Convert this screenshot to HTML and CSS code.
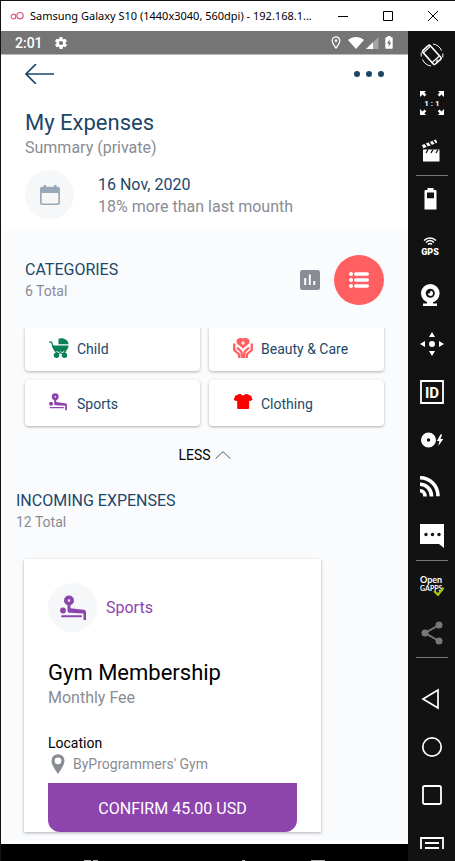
FILE: index.html
```html
<!DOCTYPE html>
<html lang="en">
<head>
<meta charset="utf-8">
<meta name="viewport" content="width=device-width, initial-scale=1">
<title>My Expenses</title>
<link rel="stylesheet" href="styles.css">
</head>
<body>
<div class="window">
  <header class="titlebar">
    <svg class="app-logo" width="14" height="10" viewBox="0 0 14 10" fill="none" stroke="#e0557f" stroke-width="1.2"><circle cx="3.500" cy="5.500" r="2.300"/><circle cx="10" cy="4.700" r="3.200"/></svg>
    <span class="window-title">Samsung Galaxy S10 (1440x3040, 560dpi) - 192.168.1...</span>
    <button class="window-btn" aria-label="Minimize"><svg width="10" height="10" viewBox="0 0 10 10" stroke="#000"><path d="M0 5.5h10"/></svg></button>
    <button class="window-btn" aria-label="Maximize"><svg width="10" height="10" viewBox="0 0 10 10" stroke="#000" fill="none"><path d="M.5.5h9v9h-9z"/></svg></button>
    <button class="window-btn" aria-label="Close"><svg width="10" height="10" viewBox="0 0 10 10" stroke="#000"><path d="M0 0l10 10M10 0L0 10"/></svg></button>
  </header>

  <div class="workspace">
    <main class="phone">
      <div class="statusbar">
        <span class="clock">2:01</span>
        <svg class="gear" width="12" height="12" viewBox="2 2 20 20" fill="#fff"><path d="M19.4 13a7.500 7.500 0 0 0 0-2l2.100-1.600a.5.5 0 0 0 .1-.6l-2-3.500a.5.5 0 0 0-.6-.2l-2.500 1a7.300 7.300 0 0 0-1.700-1l-.4-2.600a.5.5 0 0 0-.5-.5h-4a.5.5 0 0 0-.5.500l-.4 2.600a7.300 7.300 0 0 0-1.700 1l-2.500-1a.5.5 0 0 0-.6.2l-2 3.500a.5.5 0 0 0 .1.600L4.600 11a7.500 7.500 0 0 0 0 2l-2.100 1.600a.5.5 0 0 0-.1.600l2 3.500c.1.200.4.300.6.200l2.500-1a7.300 7.300 0 0 0 1.700 1l.4 2.600c0 .3.200.5.5.500h4c.3 0 .5-.2.5-.5l.4-2.600a7.300 7.300 0 0 0 1.700-1l2.500 1c.2.100.5 0 .6-.2l2-3.500a.5.5 0 0 0-.1-.6zM12 15.500a3.500 3.500 0 1 1 0-7 3.500 3.500 0 0 1 0 7z"/></svg>
        <svg class="status-pin" width="10" height="13" viewBox="0 0 10 13" fill="none" stroke="#fff" stroke-width="1.300"><path d="M5 12C2.500 8.800 1.200 6.700 1.200 4.700a3.800 3.800 0 0 1 7.600 0C8.800 6.700 7.500 8.800 5 12z"/><circle cx="5" cy="4.700" r="1.100" fill="#fff" stroke-width=".5"/></svg>
        <svg class="status-wifi" width="16" height="12" viewBox="0 0 16 12" fill="#fff"><path d="M0 3C4.500-.9 11.500-.9 16 3L8 12z"/></svg>
        <svg class="status-signal" width="13" height="12" viewBox="0 0 13 12" fill="#fff"><path d="M0 12L12.500 0v12z" opacity=".35"/><path d="M0 12L7 5.300V12z"/></svg>
        <svg class="status-battery" width="8" height="13" viewBox="0 0 8 13"><path d="M2.500 0h3v1.300H7a.7.7 0 0 1 .7.700v10a.7.7 0 0 1-.7.700H1a.7.7 0 0 1-.7-.7V2a.7.7 0 0 1 .7-.7h1.500z" fill="#fff"/><path d="M4.700 3.300L2 7.500h1.700v3.200L6.200 6.500H4.700z" fill="#757575"/></svg>
      </div>

      <section class="summary">
        <div class="topbar">
          <button class="bare" aria-label="Back"><svg width="30" height="20" viewBox="0 0 30 20" fill="none" stroke="#1c4769" stroke-width="1.700"><path d="M29 10H1M11 0L1 10l10 10"/></svg></button>
          <button class="bare" aria-label="More"><svg width="30" height="6" viewBox="0 0 30 6" fill="#1c4769"><circle cx="3" cy="3" r="3"/><circle cx="15" cy="3" r="3"/><circle cx="27" cy="3" r="3"/></svg></button>
        </div>
        <h1 class="page-title">My Expenses</h1>
        <p class="subtitle">Summary (private)</p>
        <div class="period">
          <span class="disc"><svg width="20" height="20" viewBox="0 0 20 20"><path d="M2 1.700h1.500V0H6v1.700h8V0h2.500v1.700H18a2 2 0 0 1 2 2V18a2 2 0 0 1-2 2H2a2 2 0 0 1-2-2V3.700a2 2 0 0 1 2-2z" fill="#98aaba"/><path d="M1.700 8h16.600v9.600a.8.8 0 0 1-.8.800h-15a.8.8 0 0 1-.8-.8z" fill="#f5f7f9"/></svg></span>
          <div class="period-text">
            <p class="period-date">16 Nov, 2020</p>
            <p class="period-note">18% more than last mounth</p>
          </div>
        </div>
      </section>

      <section class="categories">
        <div class="section-head">
          <div>
            <h2 class="section-title">CATEGORIES</h2>
            <p class="section-count">6 Total</p>
          </div>
          <div class="view-switch">
            <button class="bare" aria-label="Chart view"><svg width="20" height="20" viewBox="0 0 20 20"><rect width="20" height="20" rx="2.500" fill="#898c95"/><path d="M4.200 8h2v7h-2zM8.800 4.500h2V15h-2zM13.300 11h2v4h-2z" fill="#fff"/></svg></button>
            <button class="list-btn" aria-label="List view"><svg width="20" height="16" viewBox="0 0 20 16" fill="#fff"><circle cx="2" cy="2" r="2"/><circle cx="2" cy="8" r="2"/><circle cx="2" cy="14" r="2"/><rect x="5" y=".3" width="15" height="3.400" rx="1.700"/><rect x="5" y="6.300" width="15" height="3.400" rx="1.700"/><rect x="5" y="12.300" width="15" height="3.400" rx="1.700"/></svg></button>
          </div>
        </div>
        <div class="category-scroll">
          <div class="category-grid">
            <button class="category"><svg width="20" height="20" viewBox="0 0 20 20"><g fill="#098056"><path d="M9.500 6.300V.8C13.500-1 19.500 1.500 19.500 6.300z"/><path d="M2.700 7.600h16.800c0 3-1.500 5.400-4 5.700H7.500C5 13 4 11 2.700 7.600z"/><circle cx="7.500" cy="17.200" r="2.700"/><circle cx="15.500" cy="17.200" r="2.700"/></g><path d="M0 4.200h2.500l3 7.800 2 2.600 1.500 1M17 12.500l-3 3.500M9 13l5 3M9 16l5-3" stroke="#098056" stroke-width="1.300" fill="none"/></svg>Child</button>
            <button class="category"><svg width="20" height="20" viewBox="0 0 20 20"><path d="M10 10.500L4.800 6.300C1.500 3 5-1.700 10 .5c5-2.200 8.500 2.500 5.200 5.800z" fill="#ff5f61"/><path d="M10 3v4M8 5h4" stroke="#fff" stroke-width="1.200"/><g fill="none" stroke="#ff5f61" stroke-width="2.300"><path d="M1.200 5.500V12l5 4.500V20M4 9.500l4 3.800c1 1 1 2 1 6.700"/><path d="M18.800 5.500V12l-5 4.500V20M16 9.500l-4 3.800c-1 1-1 2-1 6.700"/></g></svg>Beauty &amp; Care</button>
            <button class="category"><svg width="20" height="20" viewBox="0 0 29 29" class="bench"><use href="#bench-press"/></svg>Sports</button>
            <button class="category"><svg width="20" height="20" viewBox="0 0 20 20" fill="#ff0000"><path d="M6 1h1.700c.6 1.800 4 1.800 4.600 0H14l4.200 2L19.500 7l-3.400 1.300V15a1 1 0 0 1-1 1H5.200a1 1 0 0 1-1-1V8.300L.8 7 2 3z"/></svg>Clothing</button>
          </div>
        </div>
        <button class="less-btn">LESS <svg width="16" height="8" viewBox="0 0 16 8" fill="none" stroke="#555"><path d="M.7 7.500L8 .7l7.300 6.800"/></svg></button>
      </section>

      <section class="incoming">
        <h2 class="section-title">INCOMING EXPENSES</h2>
        <p class="section-count">12 Total</p>
        <article class="expense">
          <div class="expense-kind">
            <span class="disc"><svg width="26" height="26" viewBox="0 0 26 26" class="bench"><g id="bench-press"><circle cx="3" cy="15.500" r="2.900"/><circle cx="9" cy="5.500" r="5"/><path d="M7.500 8h3v5.200l13 1.500c1.700.2 2.500 1 2.500 2.500V25h-2.500v-6.500L9.500 17.700c-1.600-.1-2-1-2-2.400z"/><rect x="1" y="20.300" width="21" height="1.900" rx=".9"/><circle cx="9" cy="5.500" r="1.200" fill="#fff"/></g></svg></span>
            <span>Sports</span>
          </div>
          <h3 class="expense-name">Gym Membership</h3>
          <p class="expense-note">Monthly Fee</p>
          <p class="location-label">Location</p>
          <p class="location"><svg width="14" height="20" viewBox="0 0 14 20" fill="#898c95"><path fill-rule="evenodd" d="M7 20C2.800 14 .5 10.200.5 6.700a6.500 6.500 0 0 1 13 0C13.500 10.200 11.200 14 7 20zM7 3.400a3.400 3.400 0 1 0 0 6.800 3.400 3.400 0 0 0 0-6.800z"/></svg>ByProgrammers' Gym</p>
          <button class="confirm">CONFIRM 45.00 USD</button>
        </article>
      </section>

      <div class="navbar">
        <svg width="14" height="1" viewBox="0 0 14 1" fill="#aaa"><path d="M0 0h7v1H0zM9 0h5v1H9z"/></svg>
        <svg class="nav-home" width="3" height="1" viewBox="0 0 3 1" fill="#aaa"><path d="M0 0h3v1H0z"/></svg>
        <svg class="nav-recents" width="14" height="1" viewBox="0 0 14 1" fill="#aaa"><path d="M0 0h14v1H0z"/></svg>
      </div>
    </main>

    <nav class="tools" aria-label="Emulator controls">
      <button class="tool" aria-label="Rotate"><svg viewBox="0 0 24 24" fill="none" stroke="#fff"><g transform="rotate(-42 12 12)"><rect x="7" y="2.500" width="10" height="18.500" rx="1.500" stroke-width="1.600"/><path d="M7.500 4.500h9M7.500 17.700h9" stroke-width="1.200"/><path d="M10.500 19.500h3"/></g><path d="M13 1a11 11 0 0 1 8.500 6.500M11 23a11 11 0 0 1-8.500-6.500M1.200 9.500v4M22.800 10.500v4"/></svg></button>
      <button class="tool" aria-label="Pixel perfect"><svg viewBox="0 0 24 24" fill="#fff"><path d="M0 0h6L4.300 1.700l2 2-1.800 1.800-2-2L0 6zM24 0h-6l1.700 1.700-2 2 1.800 1.800 2-2L24 6zM0 24h6l-1.700-1.700 2-2-1.800-1.800-2 2L0 18zM24 24h-6l1.700-1.700-2-2 1.800-1.800 2 2L24 18z"/><text x="12" y="15" text-anchor="middle" class="tool-ratio">1 : 1</text></svg></button>
      <button class="tool" aria-label="Record"><svg viewBox="0 0 24 24"><path d="M3 10.500h16.500V22.500H3zM2 6L16 .5l1.200 3.200L3.200 9.200z" fill="#fff"/><path d="M5 4.500l2.500 3.300M9 3l2.500 3.300M13 1.500l2.500 3.300" stroke="#121212" stroke-width="1.300"/><path d="M6 14l2-3.500M11 14l2-3.500M16 14l2-3.500" stroke="#121212" stroke-width="1.300"/></svg></button>
      <hr class="divider">
      <button class="tool" aria-label="Battery"><svg viewBox="0 0 24 24" fill="#fff"><path fill-rule="evenodd" d="M7.500 0h6v2h2a1 1 0 0 1 1 1v18.500H4.500V3a1 1 0 0 1 1-1h2zM7 4.500v5.800h7V4.500z"/></svg></button>
      <button class="tool" aria-label="GPS"><svg viewBox="0 0 24 24"><g fill="none" stroke="#fff" stroke-width="1.500"><path d="M4 4.500C7.500 1 12.500 1 16 4.500M6 6.500c2.500-2.400 5.500-2.400 8 0M8 8.500c1.300-1.200 2.700-1.200 4 0"/></g><text x="10" y="19" text-anchor="middle" class="tool-gps">GPS</text></svg></button>
      <button class="tool" aria-label="Camera"><svg viewBox="0 0 24 24"><circle cx="10.300" cy="9.300" r="9.300" fill="#fff"/><circle cx="10.300" cy="9.300" r="4.500" fill="#121212"/><path d="M10.500 6.800a2.600 2.600 0 1 1-2.700 2.700c1.800.5 2.800-.8 2.700-2.700z" fill="#fff"/><path d="M7 17.500h6v2h4V22H3v-2.500h4z" fill="#fff"/></svg></button>
      <button class="tool" aria-label="Move"><svg viewBox="0 0 24 24" fill="#fff"><circle cx="12" cy="12" r="3"/><path d="M12 0l3 5H9zM12 24l3-5H9zM0 12l5-3v6zM24 12l-5-3v6z"/></svg></button>
      <button class="tool" aria-label="Identifiers"><svg viewBox="0 0 24 24"><path d="M1 1h22v22H1z" fill="none" stroke="#fff" stroke-width="1.800"/><text x="12" y="17.500" text-anchor="middle" class="tool-id">ID</text></svg></button>
      <button class="tool" aria-label="Disk I/O"><svg viewBox="0 0 24 24" fill="#fff"><path fill-rule="evenodd" d="M8.500 4.500a7.500 7.500 0 1 0 0 15 7.500 7.500 0 0 0 0-15zm0 5.700a1.800 1.800 0 1 1 0 3.600 1.800 1.800 0 0 1 0-3.600z"/><path d="M20.500 6.500L16.800 13h2.500l-1 5 5-7h-2.800l1.700-4.500z"/></svg></button>
      <button class="tool" aria-label="Network"><svg viewBox="0 0 24 24" fill="none" stroke="#fff" stroke-width="3.600"><path d="M0 1.800c10 0 18 8 18 18.500M0 8.200c6.500 0 11.500 5.500 11.500 12.200M0 14.700c3 0 5 2.500 5 5.700"/></svg></button>
      <button class="tool" aria-label="Messages"><svg viewBox="0 0 24 24"><path d="M0 0h24v24l-5-4H0z" fill="#fff"/><g fill="#121212"><circle cx="6" cy="10.500" r="1.700"/><circle cx="12.500" cy="10.500" r="1.700"/><circle cx="19" cy="10.500" r="1.700"/></g></svg></button>
      <hr class="divider">
      <button class="tool" aria-label="Open GApps"><svg viewBox="0 0 24 24"><text x="0" y="10" class="tool-open">Open</text><text x="0" y="18" class="tool-gapps">GAPPS</text><path d="M14 18l4 3.700 5.500-7" fill="none" stroke="#a4c614" stroke-width="2.300"/></svg></button>
      <button class="tool" aria-label="Share"><svg viewBox="0 0 24 24" fill="#777" stroke="#777" stroke-width="2"><path d="M19 4L5 12l14 8" fill="none"/><circle cx="19" cy="4" r="2.500"/><circle cx="5" cy="12" r="2.500"/><circle cx="19" cy="20" r="2.500"/></svg></button>
      <hr class="divider">
      <div class="tool-nav">
        <button class="tool" aria-label="Back key"><svg viewBox="0 0 24 24" fill="none" stroke="#fff" stroke-width="1.700"><path d="M18 3v18L3 12z"/></svg></button>
        <button class="tool" aria-label="Home key"><svg viewBox="0 0 24 24" fill="none" stroke="#fff" stroke-width="1.700"><circle cx="12" cy="12" r="9.200"/></svg></button>
        <button class="tool" aria-label="Recents key"><svg viewBox="0 0 24 24" fill="none" stroke="#fff" stroke-width="1.800"><rect x="3" y="3" width="18" height="18" rx="1.800"/></svg></button>
        <button class="tool" aria-label="Menu key"><svg viewBox="0 0 24 24" fill="none" stroke="#fff" stroke-width="1.800"><path d="M1 18V7h22v11M5 12h14M5 17h14"/></svg></button>
      </div>
    </nav>
  </div>
</div>
</body>
</html>
```
FILE: styles.css
```css
* {
  box-sizing: border-box;
}

body {
  margin: 0;
  font-family: Roboto, "Liberation Sans", sans-serif;
  color: #1c4769;
  background: #121212;
}

h1, h2, h3, p {
  margin: 0;
  font-weight: 400;
}

button {
  margin: 0;
  padding: 0;
  border: 0;
  background: none;
  color: inherit;
  font: inherit;
  cursor: pointer;
}

svg {
  display: block;
  flex: none;
}

.window {
  display: flex;
  flex-direction: column;
  height: 100vh;
  overflow: hidden;
  border-top: 1px solid #121212;
  border-left: 1px solid #121212;
}

/* Desktop window frame */
.titlebar {
  display: flex;
  flex: none;
  align-items: center;
  height: 30px;
  padding-left: 9px;
  background: #fff;
  color: #000;
}

.window-title {
  flex: 1;
  min-width: 0;
  padding-left: 6px;
  font-family: "Noto Sans", "Open Sans", sans-serif;
  font-size: 11px;
  line-height: 16px;
  white-space: nowrap;
}

.window-btn {
  display: grid;
  flex: none;
  place-items: center;
  width: 45px;
  height: 30px;
}

.workspace {
  display: flex;
  flex: 1;
  min-height: 0;
}

.phone {
  display: flex;
  flex: 1;
  flex-direction: column;
  min-width: 0;
  background: #fafbfd;
}

/* Android status bar */
.statusbar {
  display: flex;
  flex: none;
  align-items: center;
  height: 24px;
  padding: 0 15px 0 14px;
  border-bottom: 1px solid #bbb;
  background: #757575;
  color: #fff;
}

.clock {
  font-size: 14px;
  font-weight: 500;
}

.gear {
  margin-left: 12px;
}

.status-pin {
  margin-left: auto;
}

.status-wifi {
  margin-left: 7px;
}

.status-signal {
  margin-left: 2px;
}

.status-battery {
  margin-left: 6px;
}

/* Summary */
.summary {
  padding: 7px 24px 12px;
  background: #fff;
}

.topbar {
  display: flex;
  align-items: center;
  justify-content: space-between;
  height: 24px;
  margin-bottom: 22px;
}

.page-title {
  font-size: 22px;
  line-height: 30px;
}

.subtitle {
  color: #898c95;
  font-size: 16px;
  line-height: 20px;
}

.period {
  display: flex;
  align-items: center;
  gap: 24px;
  margin-top: 12px;
}

.period-text {
  padding-top: 2px;
}

.disc {
  display: grid;
  flex: none;
  place-items: center;
  width: 49px;
  height: 49px;
  border-radius: 50%;
  background: #f5f7f9;
}

.period-date,
.period-note {
  font-size: 16px;
  line-height: 22px;
}

.period-note {
  color: #898c95;
}

/* Categories */
.categories {
  padding: 24px 24px 0;
}

.section-head,
.view-switch {
  display: flex;
  align-items: center;
  justify-content: space-between;
}

.view-switch {
  gap: 14px;
}

.section-title {
  font-size: 16px;
  line-height: 22px;
}

.section-count {
  color: #898c95;
  font-size: 14px;
  line-height: 20px;
}

.list-btn {
  display: grid;
  place-items: center;
  width: 50px;
  height: 50px;
  border-radius: 50%;
  background: #ff5f61;
}

.category-scroll {
  margin: 23px -4px 0;
  padding: 0 4px 4px;
  overflow: hidden;
}

.category-grid {
  display: grid;
  grid-template-columns: 1fr 1fr;
  gap: 9px;
  margin-top: -3px;
}

.category {
  display: flex;
  align-items: center;
  gap: 8px;
  height: 46px;
  padding: 2px 0 0 24px;
  border-radius: 4px;
  background: #fff;
  box-shadow: 0 1px 3px rgba(0, 0, 0, 0.3);
  font-size: 14px;
}

.category svg {
  margin-bottom: 2px;
}

.bench {
  fill: #8e44ad;
}

.less-btn {
  display: flex;
  align-items: center;
  justify-content: center;
  gap: 4px;
  width: 100%;
  height: 20px;
  margin-top: 15px;
  color: #000;
  font-size: 14px;
}

/* Incoming expenses */
.incoming {
  padding: 25px 15px 0;
}

.expense {
  width: 297px;
  max-width: 100%;
  margin: 27px 0 0 8px;
  padding: 24px 24px 0;
  background: #fff;
  box-shadow: 0 1px 3px rgba(0, 0, 0, 0.3);
}

.expense-kind {
  display: flex;
  align-items: center;
  gap: 9px;
  color: #8e44ad;
  font-size: 16px;
}

.expense-name {
  margin-top: 26px;
  color: #000;
  font-size: 22px;
  line-height: 30px;
}

.expense-note {
  color: #898c95;
  font-size: 16px;
  line-height: 20px;
}

.location-label {
  margin-top: 25px;
  color: #000;
  font-size: 14px;
  line-height: 20px;
}

.location {
  display: flex;
  align-items: center;
  gap: 8px;
  padding: 1px 0 0 3px;
  color: #898c95;
  font-size: 14px;
  line-height: 20px;
}

.confirm {
  display: block;
  width: 100%;
  height: 49px;
  margin-top: 9px;
  padding-top: 2px;
  border-radius: 0 0 12px 12px;
  background: #8e44ad;
  color: #fff;
  font-size: 16px;
}

/* Android navigation bar */
.navbar {
  display: flex;
  flex: 1;
  align-items: flex-end;
  min-height: 17px;
  margin-top: 12px;
  padding-left: 83px;
  background: #000;
}

.nav-home {
  margin-left: 144px;
}

.nav-recents {
  margin-left: 66px;
}

/* Emulator toolbar */
.tools {
  flex: none;
  width: 47px;
  overflow: hidden;
  background: #121212;
}

.tool {
  display: grid;
  place-items: center;
  width: 100%;
  height: 48px;
}

.tool svg {
  width: 24px;
  height: 24px;
}

.tool-nav {
  padding-top: 17px;
}

.divider {
  width: 32px;
  height: 1px;
  margin: 0 auto;
  border: 0;
  background: #777;
}

.tool text {
  fill: #fff;
}

.tool-ratio {
  font-size: 8px;
  font-weight: 700;
}

.tool-gps {
  font-size: 9px;
  font-weight: 900;
}

.tool-id {
  font-size: 15px;
  font-weight: 700;
}

.tool-open {
  font-family: Lato, sans-serif;
  font-size: 9px;
  font-weight: 700;
}

.tool-gapps {
  font-family: Lato, sans-serif;
  font-size: 7px;
  font-weight: 700;
}
```
